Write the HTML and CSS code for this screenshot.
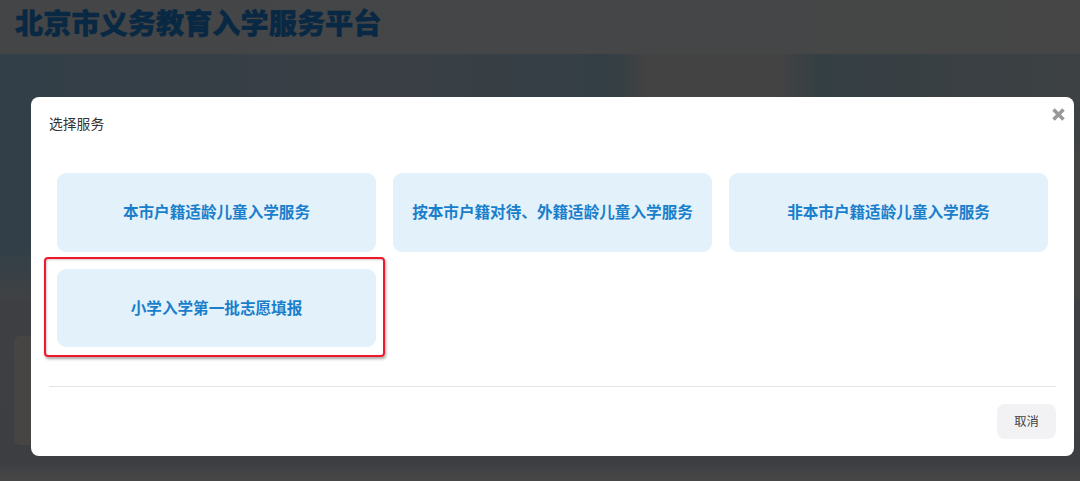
FILE: index.html
```html
<!DOCTYPE html>
<html lang="zh-CN">
<head>
<meta charset="utf-8">
<title>北京市义务教育入学服务平台</title>
<link rel="stylesheet" href="styles.css">
</head>
<body>
<div class="page">
  <header class="topbar"><h1 class="brand">北京市义务教育入学服务平台</h1></header>
  <main class="backdrop">
    <div class="hero"></div>
    <div class="bg-card"></div>
  </main>
  <div class="overlay">
    <section class="modal">
      <div class="modal-head">
        <h2 class="modal-title">选择服务</h2>
        <svg class="close" viewBox="0 0 12 12" aria-label="关闭"><path d="M3 1 L6 4 L9 1 L11 3 L8 6 L11 9 L9 11 L6 8 L3 11 L1 9 L4 6 L1 3 Z"/></svg>
      </div>
      <div class="services">
        <a class="service">本市户籍适龄儿童入学服务</a>
        <a class="service">按本市户籍对待、外籍适龄儿童入学服务</a>
        <a class="service">非本市户籍适龄儿童入学服务</a>
        <a class="service service-marked">小学入学第一批志愿填报</a>
      </div>
      <div class="modal-foot">
        <button class="cancel">取消</button>
      </div>
    </section>
  </div>
</div>
</body>
</html>
```
FILE: styles.css
```css
* { box-sizing: border-box; }
html, body { margin: 0; height: 100%; }
body {
  font-family: "Noto Sans CJK SC", "Liberation Sans", sans-serif;
  overflow: hidden;
  background: #3f4143;
}
.page {
  position: relative;
  width: 1080px;
  height: 481px;
  overflow: hidden;
  display: flex;
  flex-direction: column;
}
.topbar {
  height: 54px;
  flex: none;
  background: linear-gradient(90deg, #434547 0%, #444647 50%, #464646 100%);
  padding: 2px 15px 0;
}
.brand {
  margin: 0;
  font-size: 28.2px;
  line-height: 40px;
  font-weight: 900;
  color: #082843;
  -webkit-text-stroke: 0.4px #082843;
}
.backdrop {
  flex: 1;
  position: relative;
  display: flex;
  flex-direction: column;
  background: linear-gradient(180deg, #404244 0%, #3c3e42 96%, #464646 99%);
}
.hero {
  height: 245px;
  flex: none;
  background:
    linear-gradient(180deg, transparent 32%, #434343 45%) right top / 8px 100% no-repeat,
    linear-gradient(180deg, transparent 80%, #404244 100%),
    linear-gradient(90deg, #323f48 0%, #373f46 20%, #3a3f45 35%, #343f45 56%, #373f44 57.5%, #434343 60%, #434343 72%, #343f44 76%, #373f44 80%, #3d4143 100%);
}
.bg-card {
  position: absolute;
  left: 14px;
  top: 282px;
  width: 60px;
  height: 109px;
  border-radius: 6px;
  background: #464544;
}
.overlay {
  position: absolute;
  inset: 0;
  padding: 97px 6px 25px 31px;
}
.modal {
  height: 359px;
  background: #fff;
  border-radius: 8px;
  display: flex;
  flex-direction: column;
  padding: 0 18px;
}
.modal-head {
  height: 76px;
  flex: none;
  display: flex;
  justify-content: space-between;
  align-items: flex-start;
}
.modal-title {
  margin: 16px 0 0;
  font-size: 13.8px;
  line-height: 20px;
  font-weight: 400;
  color: #333;
}
.close {
  width: 15px;
  height: 15px;
  margin: 10px -10px 0 0;
  fill: #999;
}
.services {
  display: grid;
  grid-template-columns: repeat(3, 319px);
  grid-auto-rows: 78.5px;
  gap: 17px;
  padding-left: 8px;
  flex: none;
}
.service {
  display: flex;
  align-items: center;
  justify-content: center;
  border-radius: 9px;
  background: #e3f1fb;
  color: #1a7fcb;
  font-size: 15.6px;
  line-height: 20px;
  padding-bottom: 2px;
  font-weight: 700;
  position: relative;
}
.service-marked::after {
  content: "";
  position: absolute;
  left: -13px;
  right: -9px;
  top: -12px;
  bottom: -10px;
  border: 2.5px solid #f0182c;
  border-radius: 4px;
  box-shadow: 1px 2px 3px rgba(0,0,0,.35), inset 1px 1px 2px rgba(0,0,0,.2);
}
.modal-foot {
  margin-top: 39px;
  border-top: 1px solid #e4e4e6;
  display: flex;
  justify-content: flex-end;
  padding-top: 17px;
}
.cancel {
  width: 59px;
  height: 35px;
  border: 0;
  border-radius: 8px;
  background: #f2f2f4;
  color: #444;
  font: 400 12.3px/32px "Noto Sans CJK SC", sans-serif;
  padding: 0 0 2px;
}
```
